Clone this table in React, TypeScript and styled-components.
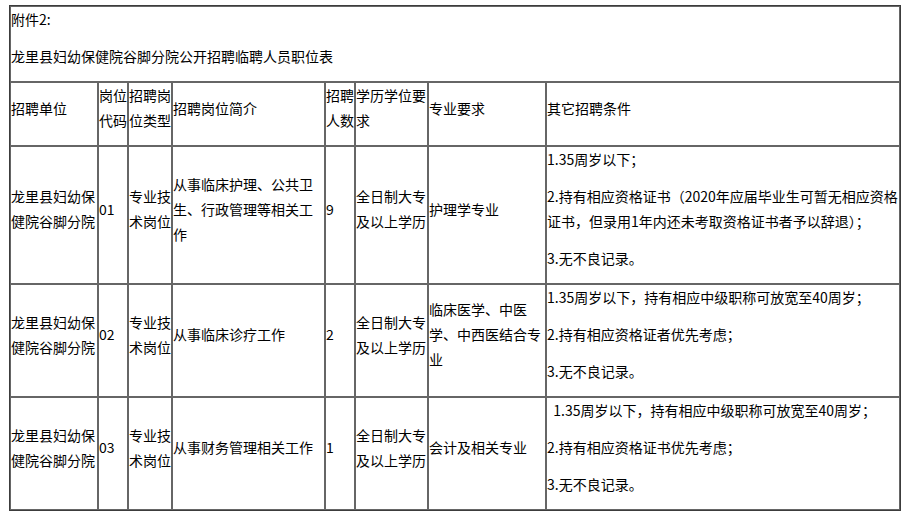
import React from "react";
import styled, { createGlobalStyle } from "styled-components";

const GlobalStyle = createGlobalStyle`
  html, body {
    margin: 0;
    padding: 0;
    background: #fff;
  }
  body {
    font-family: "Noto Sans CJK SC", "Noto Sans", sans-serif;
    font-size: 14px;
    color: #000;
  }
`;

const Page = styled.div`
  padding: 5px 0 0 9px;
`;

const Sheet = styled.table`
  table-layout: fixed;
  width: 892px;
  border-collapse: separate;
  border-spacing: 0;
  border: 1px solid #3c3c3c;
`;

const Cell = styled.td`
  border: 1px solid #666;
  padding: 0;
  vertical-align: middle;
  text-align: left;
  line-height: 25px;
  word-break: break-all;
`;

const Para = styled.p`
  margin: 0 0 12px;
`;

const colWidths = [88, 30, 44, 153, 30, 73, 118, 354];

const headers = [
  "招聘单位",
  "岗位代码",
  "招聘岗位类型",
  "招聘岗位简介",
  "招聘人数",
  "学历学位要求",
  "专业要求",
  "其它招聘条件",
];

type Row = {
  unit: string;
  code: string;
  kind: string;
  intro: string;
  count: string;
  edu: string;
  major: string;
  other: string[];
};

const rows: Row[] = [
  {
    unit: "龙里县妇幼保健院谷脚分院",
    code: "01",
    kind: "专业技术岗位",
    intro: "从事临床护理、公共卫生、行政管理等相关工作",
    count: "9",
    edu: "全日制大专及以上学历",
    major: "护理学专业",
    other: [
      "1.35周岁以下；",
      "2.持有相应资格证书（2020年应届毕业生可暂无相应资格证书，但录用1年内还未考取资格证书者予以辞退）；",
      "3.无不良记录。",
    ],
  },
  {
    unit: "龙里县妇幼保健院谷脚分院",
    code: "02",
    kind: "专业技术岗位",
    intro: "从事临床诊疗工作",
    count: "2",
    edu: "全日制大专及以上学历",
    major: "临床医学、中医学、中西医结合专业",
    other: [
      "1.35周岁以下，持有相应中级职称可放宽至40周岁；",
      "2.持有相应资格证者优先考虑；",
      "3.无不良记录。",
    ],
  },
  {
    unit: "龙里县妇幼保健院谷脚分院",
    code: "03",
    kind: "专业技术岗位",
    intro: "从事财务管理相关工作",
    count: "1",
    edu: "全日制大专及以上学历",
    major: "会计及相关专业",
    other: [
      "\u00a0\u00a01.35周岁以下，持有相应中级职称可放宽至40周岁；",
      "2.持有相应资格证书优先考虑；",
      "3.无不良记录。",
    ],
  },
];

const TextCell = ({ text }: { text: string }) => (
  <Cell>
    <Para>{text}</Para>
  </Cell>
);

export default function App() {
  return (
    <Page>
      <GlobalStyle />
      <Sheet>
        <colgroup>
          {colWidths.map((w, i) => (
            <col key={i} style={{ width: w }} />
          ))}
        </colgroup>
        <tbody>
          <tr>
            <Cell colSpan={8}>
              <Para>附件2:</Para>
              <Para>龙里县妇幼保健院谷脚分院公开招聘临聘人员职位表</Para>
            </Cell>
          </tr>
          <tr>
            {headers.map((h) => (
              <TextCell key={h} text={h} />
            ))}
          </tr>
          {rows.map((r) => (
            <tr key={r.code}>
              <TextCell text={r.unit} />
              <TextCell text={r.code} />
              <TextCell text={r.kind} />
              <TextCell text={r.intro} />
              <TextCell text={r.count} />
              <TextCell text={r.edu} />
              <TextCell text={r.major} />
              <Cell>
                {r.other.map((t, i) => (
                  <Para key={i}>{t}</Para>
                ))}
              </Cell>
            </tr>
          ))}
        </tbody>
      </Sheet>
    </Page>
  );
}
